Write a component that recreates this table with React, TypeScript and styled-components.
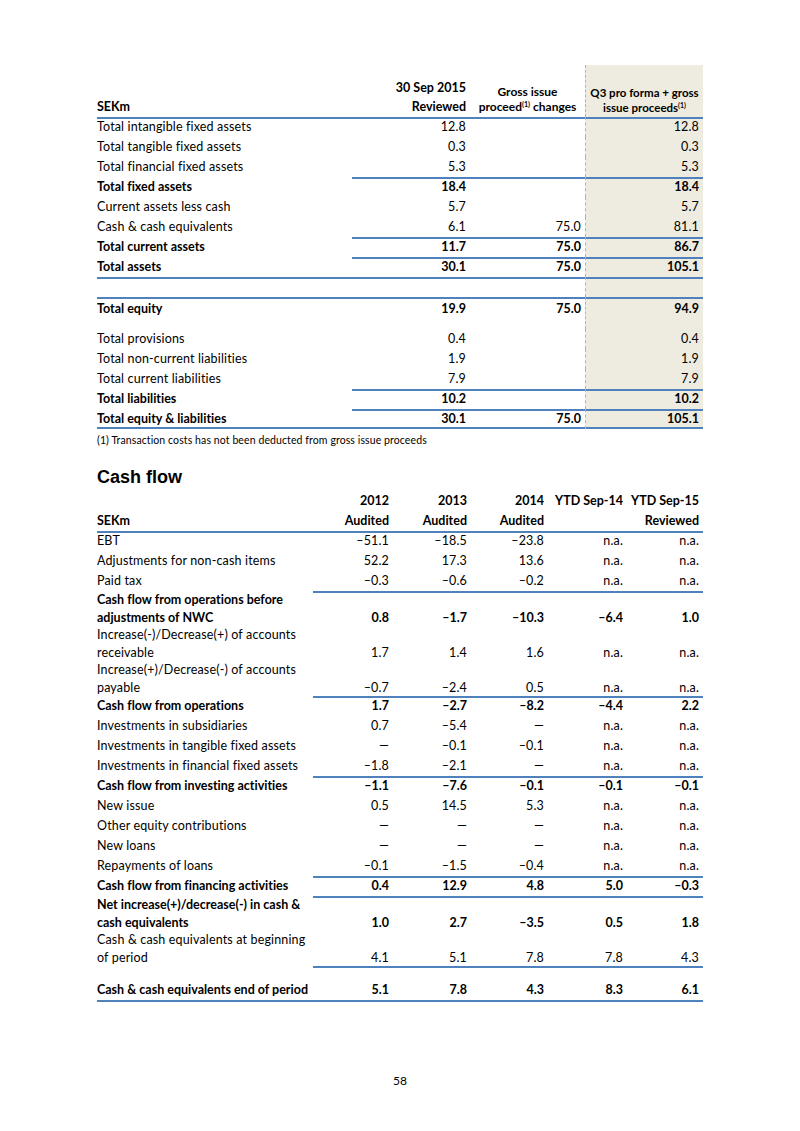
import React from 'react';
import styled, { createGlobalStyle } from 'styled-components';

const LINE = '#4f81bd';
const SHADE = '#eeece1';
const DASH = '#9db5d6';

const Global = createGlobalStyle`
  html, body { margin: 0; padding: 0; background: #fff; }
  body {
    font-family: Lato, "Liberation Sans", sans-serif;
    color: #000;
    font-size: 12.5px;
    font-variant-ligatures: none;
    font-feature-settings: "liga" 0, "clig" 0;
  }
`;

const Page = styled.div`
  width: 800px;
  height: 1131px;
  box-sizing: border-box;
  padding: 65px 97px 0 97px;
  display: flex;
  flex-direction: column;
`;

const Table = styled.div`
  display: flex;
  flex-direction: column;
  width: 606px;
`;

const Row = styled.div<{ $cols: string; $h: number }>`
  display: grid;
  grid-template-columns: ${p => p.$cols};
  height: ${p => p.$h}px;
`;

const shadow = (top?: boolean, bottom?: boolean) => {
  const s: string[] = [];
  if (top) s.push(`inset 0 2px 0 ${LINE}`);
  if (bottom) s.push(`inset 0 -2px 0 ${LINE}`);
  return s.length ? s.join(', ') : 'none';
};

type Align = 'left' | 'right' | 'center';

const Cell = styled.div<{
  $align?: Align;
  $bold?: boolean;
  $top?: boolean;
  $bottom?: boolean;
  $shade?: boolean;
  $pb?: number;
  $pr?: number;
  $lh?: number;
  $start?: boolean;
  $size?: number;
}>`
  box-sizing: border-box;
  display: flex;
  flex-direction: column;
  justify-content: ${p => (p.$start ? 'flex-start' : 'flex-end')};
  align-items: ${p => (p.$align === 'right' ? 'flex-end' : p.$align === 'center' ? 'center' : 'flex-start')};
  text-align: ${p => p.$align ?? 'left'};
  padding: 0 ${p => (p.$align === 'right' ? p.$pr ?? 4 : 0)}px ${p => p.$pb ?? 0}px 0;
  line-height: ${p => p.$lh ?? 20}px;
  font-size: ${p => p.$size ?? 12.5}px;
  font-weight: ${p => (p.$bold ? 700 : 400)};
  letter-spacing: ${p => (p.$bold ? 0 : 0.15)}px;
  box-shadow: ${p => shadow(p.$top, p.$bottom)};
  background: ${p => (p.$shade ? SHADE : 'transparent')};
  border-left: ${p => (p.$shade ? `1px dashed ${DASH}` : 'none')};
  white-space: nowrap;
`;

const Sup = styled.sup`
  font-size: 0.6em;
  line-height: 0;
  vertical-align: 0.55em;
`;

const Footnote = styled.div`
  font-size: 10.5px;
  line-height: 14px;
  letter-spacing: 0.1px;
  margin-top: 4px;
`;

const Heading = styled.h2`
  margin: 19px 0 3px 0;
  font-family: "Liberation Sans", Arial, sans-serif;
  font-weight: 700;
  font-size: 18px;
  line-height: 22px;
`;

const PageNumber = styled.div`
  margin-top: auto;
  padding-bottom: 43px;
  text-align: center;
  font-size: 12px;
  line-height: 14px;
`;

const BAL_COLS = '255px 118px 115px 118px';
const CF_COLS = '216px 78px 78px 77px 79px 78px';

type BRow = {
  label: string;
  v: [string, string, string];
  bold?: boolean;
  rule?: 'full' | 'values';
  h?: number;
  pb?: number;
  bottom?: boolean;
};

const balance: BRow[] = [
  { label: 'Total intangible fixed assets', v: ['12.8', '', '12.8'], rule: 'full' },
  { label: 'Total tangible fixed assets', v: ['0.3', '', '0.3'] },
  { label: 'Total financial fixed assets', v: ['5.3', '', '5.3'] },
  { label: 'Total fixed assets', v: ['18.4', '', '18.4'], bold: true, rule: 'values' },
  { label: 'Current assets less cash', v: ['5.7', '', '5.7'] },
  { label: 'Cash & cash equivalents', v: ['6.1', '75.0', '81.1'] },
  { label: 'Total current assets', v: ['11.7', '75.0', '86.7'], bold: true, rule: 'values' },
  { label: 'Total assets', v: ['30.1', '75.0', '105.1'], bold: true, rule: 'values' },
  { label: '', v: ['', '', ''], rule: 'full' },
  { label: 'Total equity', v: ['19.9', '75.0', '94.9'], bold: true, rule: 'full', h: 32, pb: 10 },
  { label: 'Total provisions', v: ['0.4', '', '0.4'] },
  { label: 'Total non-current liabilities', v: ['1.9', '', '1.9'] },
  { label: 'Total current liabilities', v: ['7.9', '', '7.9'] },
  { label: 'Total liabilities', v: ['10.2', '', '10.2'], bold: true, rule: 'values' },
  { label: 'Total equity & liabilities', v: ['30.1', '75.0', '105.1'], bold: true, rule: 'values', bottom: true },
];

type CRow = {
  label: string[];
  v: string[];
  bold?: boolean;
  rule?: 'full' | 'values';
  h?: number;
  pb?: number;
  bottom?: boolean;
};

const na = 'n.a.';
const cashflow: CRow[] = [
  { label: ['EBT'], v: ['–51.1', '–18.5', '–23.8', na, na], rule: 'full' },
  { label: ['Adjustments for non-cash items'], v: ['52.2', '17.3', '13.6', na, na] },
  { label: ['Paid tax'], v: ['–0.3', '–0.6', '–0.2', na, na] },
  { label: ['Cash flow from operations before', 'adjustments of NWC'], v: ['0.8', '–1.7', '–10.3', '–6.4', '1.0'], bold: true, rule: 'values' },
  { label: ['Increase(-)/Decrease(+) of accounts', 'receivable'], v: ['1.7', '1.4', '1.6', na, na] },
  { label: ['Increase(+)/Decrease(-) of accounts', 'payable'], v: ['–0.7', '–2.4', '0.5', na, na] },
  { label: ['Cash flow from operations'], v: ['1.7', '–2.7', '–8.2', '–4.4', '2.2'], bold: true, rule: 'values' },
  { label: ['Investments in subsidiaries'], v: ['0.7', '–5.4', '—', na, na] },
  { label: ['Investments in tangible fixed assets'], v: ['—', '–0.1', '–0.1', na, na] },
  { label: ['Investments in financial fixed assets'], v: ['–1.8', '–2.1', '—', na, na] },
  { label: ['Cash flow from investing activities'], v: ['–1.1', '–7.6', '–0.1', '–0.1', '–0.1'], bold: true, rule: 'values' },
  { label: ['New issue'], v: ['0.5', '14.5', '5.3', na, na] },
  { label: ['Other equity contributions'], v: ['—', '—', '—', na, na] },
  { label: ['New loans'], v: ['—', '—', '—', na, na] },
  { label: ['Repayments of loans'], v: ['–0.1', '–1.5', '–0.4', na, na] },
  { label: ['Cash flow from financing activities'], v: ['0.4', '12.9', '4.8', '5.0', '–0.3'], bold: true, rule: 'values' },
  { label: ['Net increase(+)/decrease(-) in cash &', 'cash equivalents'], v: ['1.0', '2.7', '–3.5', '0.5', '1.8'], bold: true, rule: 'values' },
  { label: ['Cash & cash equivalents at beginning', 'of period'], v: ['4.1', '5.1', '7.8', '7.8', '4.3'] },
  { label: ['Cash & cash equivalents end of period'], v: ['5.1', '7.8', '4.3', '8.3', '6.1'], bold: true, rule: 'values', h: 36, pb: 2, bottom: true },
];

const cfHeads: [string, string][] = [
  ['2012', 'Audited'],
  ['2013', 'Audited'],
  ['2014', 'Audited'],
  ['YTD Sep-14', ''],
  ['YTD Sep-15', 'Reviewed'],
];

const padFor = (j: number) => (j === 4 ? 4 : 2);

const BalanceSheet = () => (
  <Table>
    <Row $cols={BAL_COLS} $h={52}>
      <Cell $align="left" $bold $lh={19} $pb={1.5}>SEKm</Cell>
      <Cell $align="right" $bold $lh={19} $pb={1.5}>
        <span>30 Sep 2015</span>
        <span>Reviewed</span>
      </Cell>
      <Cell $align="center" $bold $lh={15} $pb={3.5} $size={12}>
        <span>Gross issue</span>
        <span>
          proceed<Sup>(1)</Sup> changes
        </span>
      </Cell>
      <Cell $align="center" $bold $shade $lh={15} $pb={2.5} $size={11.5}>
        <span>Q3 pro forma + gross</span>
        <span>
          issue proceeds<Sup>(1)</Sup>
        </span>
      </Cell>
    </Row>
    {balance.map((r, i) => (
      <Row key={i} $cols={BAL_COLS} $h={r.h ?? 20}>
        <Cell $align="left" $bold={r.bold} $top={r.rule === 'full'} $bottom={r.bottom} $pb={r.pb}>
          {r.label}
        </Cell>
        {r.v.map((x, j) => (
          <Cell
            key={j}
            $align="right"
            $bold={r.bold}
            $top={!!r.rule}
            $bottom={r.bottom}
            $shade={j === 2}
            $pb={r.pb}
          >
            {x}
          </Cell>
        ))}
      </Row>
    ))}
  </Table>
);

const CashFlow = () => (
  <Table>
    <Row $cols={CF_COLS} $h={40}>
      <Cell $align="left" $bold>SEKm</Cell>
      {cfHeads.map(([a, b], i) => (
        <Cell key={i} $align="right" $bold $pr={padFor(i)}>
          <span>{a}</span>
          <span>{b || '\u00a0'}</span>
        </Cell>
      ))}
    </Row>
    {cashflow.map((r, i) => {
      const two = r.label.length > 1;
      const h = r.h ?? (two ? 35 : 20);
      const lh = two ? 17.5 : 20;
      return (
        <Row key={i} $cols={CF_COLS} $h={h}>
          <Cell
            $align="left"
            $bold={r.bold}
            $top={r.rule === 'full'}
            $bottom={r.bottom}
            $lh={lh}
            $start={two}
            $pb={r.pb}
          >
            {r.label.map((l, k) => (
              <span key={k}>{l}</span>
            ))}
          </Cell>
          {r.v.map((x, j) => (
            <Cell
              key={j}
              $align="right"
              $bold={r.bold}
              $top={!!r.rule}
              $bottom={r.bottom}
              $lh={lh}
              $pb={r.pb}
              $pr={padFor(j)}
            >
              {x}
            </Cell>
          ))}
        </Row>
      );
    })}
  </Table>
);

export default function App() {
  return (
    <>
      <Global />
      <Page>
        <BalanceSheet />
        <Footnote>(1) Transaction costs has not been deducted from gross issue proceeds</Footnote>
        <Heading>Cash flow</Heading>
        <CashFlow />
        <PageNumber>58</PageNumber>
      </Page>
    </>
  );
}
